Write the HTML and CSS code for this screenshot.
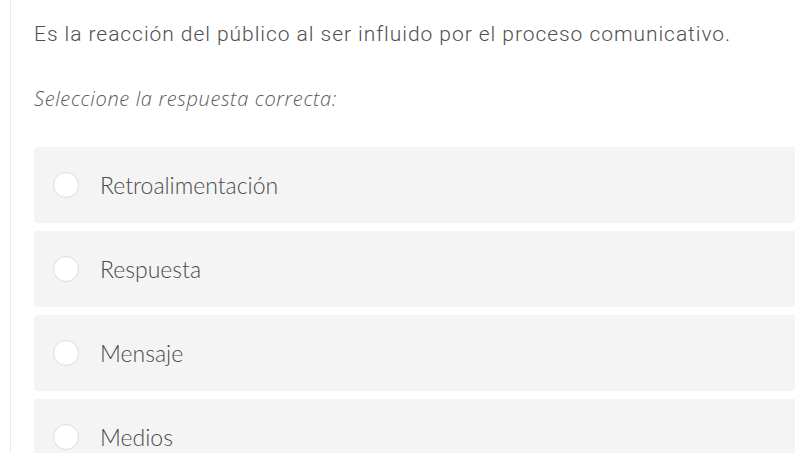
FILE: index.html
```html
<!DOCTYPE html>
<html lang="es">
<head>
	<meta charset="UTF-8">
	<title>Pregunta</title>
	<link rel="stylesheet" href="styles.css">
</head>
<body>
	<div id="box">
		<p class="qtext">Es la reacción del público al ser influido por el proceso comunicativo.</p>
		<p class="prompt">Seleccione la respuesta correcta:</p>
		<ul id="answers">
			<li><span class="radio"></span><span class="label">Retroalimentación</span></li>
			<li><span class="radio"></span><span class="label">Respuesta</span></li>
			<li><span class="radio"></span><span class="label">Mensaje</span></li>
			<li><span class="radio"></span><span class="label">Medios</span></li>
		</ul>
	</div>
</body>
</html>
```
FILE: styles.css
```css
body { margin:0;overflow:hidden;background:#fff;font-family:Lato,"Liberation Sans",sans-serif; }
ul { margin:0;padding:0;list-style:none; }
p { margin:0; }

#box { margin-left:10px;padding:20px 0 0 23px;border-left:1px solid #e8e8e8;height:433px; }

.qtext { font-family:Roboto,sans-serif;font-weight:300;font-size:21px;line-height:28px;letter-spacing:0.95px;color:#505050;white-space:nowrap; }
.prompt { margin-top:37px;font-family:"Open Sans",sans-serif;font-weight:300;font-style:italic;font-size:20px;line-height:28px;letter-spacing:0.65px;color:#5a5a5a; }

#answers { margin-top:34px; }
#answers li { display:flex;align-items:center;height:76px;margin-bottom:8px;padding-left:19px;background:#f4f4f4;border-radius:4px 0 0 4px; }
#answers .radio { width:24px;height:24px;border:1px solid #ddd;border-radius:50%;background:#fff;flex:none; }
#answers .label { margin-left:21px;font-size:23px;font-weight:300;color:#4a4a4a; }
```
